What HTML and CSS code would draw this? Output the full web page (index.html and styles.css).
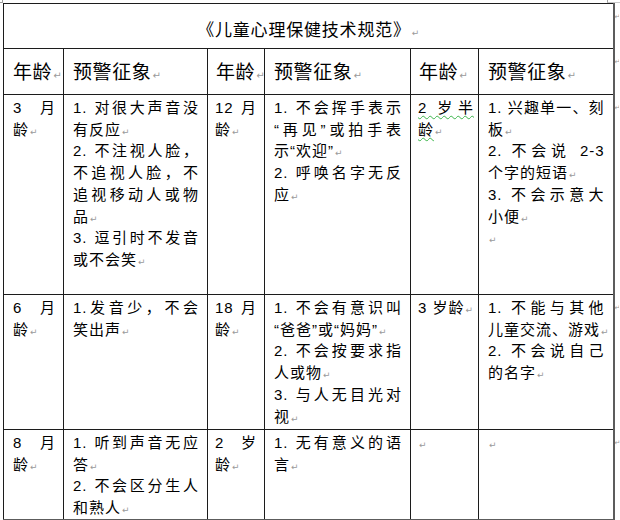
FILE: index.html
```html
<!DOCTYPE html>
<html lang="zh-CN">
<head>
<meta charset="utf-8">
<title>儿童心理保健技术规范</title>
<link rel="stylesheet" href="styles.css">
</head>
<body>
<table class="spec">
  <colgroup>
    <col class="w1"><col class="w2"><col class="w3"><col class="w4"><col class="w5"><col class="w6"><col class="w7">
  </colgroup>
  <tr class="r-title">
    <td colspan="6" class="title last">《儿童心理保健技术规范》<span class="pm">↵</span></td>
    <td class="rm">↵</td>
  </tr>
  <tr class="r-head">
    <th class="c1">年龄<span class="pm">↵</span></th>
    <th class="c2">预警征象<span class="pm">↵</span></th>
    <th class="c3">年龄<span class="pm">↵</span></th>
    <th class="c4">预警征象<span class="pm">↵</span></th>
    <th class="c5">年龄<span class="pm">↵</span></th>
    <th class="c6 last">预警征象<span class="pm">↵</span></th>
    <td class="rm">↵</td>
  </tr>
  <tr class="r1">
    <td class="c1"><span class="j">3 月</span><span class="l">龄<span class="pm">↵</span></span></td>
    <td class="c2"><span class="j">1. 对很大声音没</span><span class="l">有反应<span class="pm">↵</span></span><span class="j">2. 不注视人脸，</span><span class="j">不追视人脸，不</span><span class="j">追视移动人或物</span><span class="l">品<span class="pm">↵</span></span><span class="j">3. 逗引时不发音</span><span class="l">或不会笑<span class="pm">↵</span></span></td>
    <td class="c3"><span class="j">12 月</span><span class="l">龄<span class="pm">↵</span></span></td>
    <td class="c4"><span class="j">1. 不会挥手表示</span><span class="j">“再见”或拍手表</span><span class="l">示“欢迎”<span class="pm">↵</span></span><span class="j">2. 呼唤名字无反</span><span class="l">应<span class="pm">↵</span></span></td>
    <td class="c5"><span class="j"><span class="gram">2 岁半</span></span><span class="l"><span class="gram">龄</span><span class="pm">↵</span></span></td>
    <td class="c6 last"><span class="j">1. 兴趣单一、刻</span><span class="l">板<span class="pm">↵</span></span><span class="j">2. 不会说 2-3</span><span class="l">个字的短语<span class="pm">↵</span></span><span class="j">3. 不会示意大</span><span class="l">小便<span class="pm">↵</span></span><span class="l"><span class="pm">↵</span></span></td>
    <td class="rm">↵</td>
  </tr>
  <tr class="r2">
    <td class="c1"><span class="j">6 月</span><span class="l">龄<span class="pm">↵</span></span></td>
    <td class="c2"><span class="j">1.发音少，不会</span><span class="l">笑出声<span class="pm">↵</span></span></td>
    <td class="c3"><span class="j">18 月</span><span class="l">龄<span class="pm">↵</span></span></td>
    <td class="c4"><span class="j">1. 不会有意识叫</span><span class="l">“爸爸”或“妈妈”<span class="pm">↵</span></span><span class="j">2. 不会按要求指</span><span class="l">人或物<span class="pm">↵</span></span><span class="j">3. 与人无目光对</span><span class="l">视<span class="pm">↵</span></span></td>
    <td class="c5"><span class="l">3 岁龄<span class="pm">↵</span></span></td>
    <td class="c6 last"><span class="j">1. 不能与其他</span><span class="l">儿童交流、游戏<span class="pm">↵</span></span><span class="j">2. 不会说自己</span><span class="l">的名字<span class="pm">↵</span></span></td>
    <td class="rm">↵</td>
  </tr>
  <tr class="r3">
    <td class="c1"><span class="j">8 月</span><span class="l">龄<span class="pm">↵</span></span></td>
    <td class="c2"><span class="j">1. 听到声音无应</span><span class="l">答<span class="pm">↵</span></span><span class="j">2. 不会区分生人</span><span class="l">和熟人<span class="pm">↵</span></span></td>
    <td class="c3"><span class="j">2 岁</span><span class="l">龄<span class="pm">↵</span></span></td>
    <td class="c4"><span class="j">1. 无有意义的语</span><span class="l">言<span class="pm">↵</span></span></td>
    <td class="c5"><span class="l"><span class="pm">↵</span></span></td>
    <td class="c6 last"><span class="l"><span class="pm">↵</span></span></td>
    <td class="rm">↵</td>
  </tr>
</table>
</body>
</html>
```
FILE: styles.css
```css
html, body {
  margin: 0;
  padding: 0;
  background: #ffffff;
}

body {
  position: relative;
  font-family: "Liberation Sans", "Noto Sans CJK SC", sans-serif;
  color: #000000;
}

/* Word text-boundary corner marks */
body::before {
  content: "";
  position: absolute;
  left: 0;
  top: 0;
  width: 2px;
  height: 2px;
  border-right: 1px solid #a0a0a0;
  border-bottom: 1px solid #a0a0a0;
}

body::after {
  content: "";
  position: absolute;
  left: 607px;
  top: 0;
  width: 13px;
  height: 2px;
  border-left: 1px solid #a0a0a0;
  border-bottom: 1px solid #c8c8c8;
}

.spec {
  border-collapse: collapse;
  table-layout: fixed;
  width: 616px;
  margin: 3px 0 0 3px;
}

.w1 { width: 60px; }
.w2 { width: 144px; }
.w3 { width: 57px; }
.w4 { width: 146px; }
.w5 { width: 68px; }
.w6 { width: 135px; }
.w7 { width: 6px; }

.spec td,
.spec th {
  border: 1px solid #1c1c1c;
  padding: 2px 8px 0 9px;
  vertical-align: top;
  font-size: 15px;
  line-height: 21.7px;
  letter-spacing: 1px;
  font-weight: normal;
  text-align: left;
  overflow: hidden;
}

.spec td.rm {
  border: none;
  padding: 8px 0 0 0;
  font-family: "DejaVu Sans", sans-serif;
  font-size: 7px;
  line-height: 10px;
  letter-spacing: 0;
  color: #9a9a9a;
}

.spec .last {
  border-right: 2px solid #5c5c5c;
}

.r3 td.c1, .r3 td.c2, .r3 td.c3, .r3 td.c4, .r3 td.c5, .r3 td.c6 {
  border-bottom: 2px solid #5c5c5c;
}

.r-title { height: 45px; }
.r-head { height: 46px; }
.r1 { height: 200px; }
.r2 { height: 135px; }
.r3 { height: 90px; }

.spec td.title {
  text-align: center;
  vertical-align: middle;
  font-size: 17px;
  letter-spacing: 0.8px;
  padding: 9px 0 0 0;
}

.spec th {
  vertical-align: middle;
  white-space: nowrap;
  font-size: 19px;
  letter-spacing: 0.6px;
  padding: 2px 0 0 9px;
}

.spec th.c3 { padding-left: 8px; }
.spec th.c5 { padding-left: 8px; }

.spec .c1 { padding-left: 9px; padding-right: 7px; }
.spec .c3 { padding-left: 7px; padding-right: 7px; }
.spec .c5 { padding-left: 7px; padding-right: 4px; }

.j {
  display: block;
  text-align: justify;
  text-align-last: justify;
}

.l {
  display: block;
  text-align: left;
  white-space: nowrap;
  min-height: 21.7px;
}

.pm {
  font-family: "DejaVu Sans", sans-serif;
  font-size: 9px;
  line-height: 9px;
  letter-spacing: 0;
  color: #9a9a9a;
  margin-left: 1px;
}

.spec th .pm {
  font-size: 10px;
  line-height: 10px;
}

.gram {
  text-decoration: underline wavy #3cb44b;
  text-decoration-thickness: 1px;
  text-underline-offset: 2px;
}
```
